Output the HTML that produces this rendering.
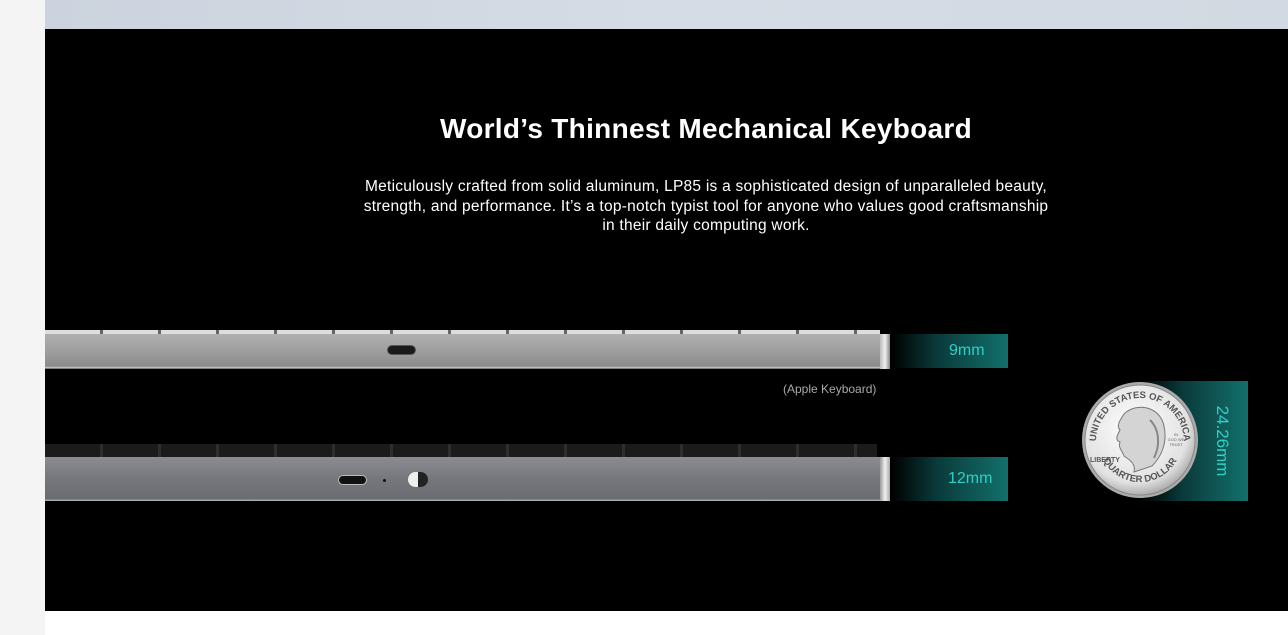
<!DOCTYPE html>
<html><head><meta charset="utf-8"><style>
*{margin:0;padding:0;box-sizing:border-box}
body{width:1288px;height:635px;background:#fff;position:relative;overflow:hidden;font-family:"Liberation Sans",sans-serif}
.left{position:absolute;left:0;top:0;width:45px;height:635px;background:#f4f4f4}
.top{position:absolute;left:45px;top:0;width:1243px;height:29px;background:linear-gradient(90deg,#ccd3de,#d6dce5 50%,#d3d9e2)}
.main{position:absolute;left:45px;top:29px;width:1243px;height:582px;background:#000}
h1{position:absolute;left:0;width:1412px;top:113px;text-align:center;color:#fff;font-size:28px;font-weight:bold;letter-spacing:0.3px}
.p{position:absolute;left:306px;width:800px;top:177px;text-align:center;color:#fff;font-size:15.5px;line-height:19.5px;letter-spacing:0.25px}
.abs{position:absolute}
.teal{background:linear-gradient(90deg,#000 0%,#0a3b3b 40%,#13706c 100%);color:#2fd0c6;font-size:16px}
</style></head><body>
<div class="left"></div><div class="top"></div><div class="main"></div>
<h1>World’s Thinnest Mechanical Keyboard</h1>
<div class="p">Meticulously crafted from solid aluminum, LP85 is a sophisticated design of unparalleled beauty,<br>strength, and performance. It’s a top-notch typist tool for anyone who values good craftsmanship<br>in their daily computing work.</div>

<!-- apple keyboard -->
<div class="abs" style="left:45px;top:330px;width:835px;height:4px;background:repeating-linear-gradient(90deg,#ddd 0 55px,#666 55px 58px)"></div>
<div class="abs" style="left:45px;top:334px;width:838px;height:35px;background:linear-gradient(180deg,#b0b0b0,#9a9a9a 60%,#8a8a8a 92%,#ccc 96%,#555);"></div>
<div class="abs" style="left:880px;top:334px;width:10px;height:35px;background:linear-gradient(90deg,#bbb,#eee,#888)"></div>
<div class="abs" style="left:387px;top:345px;width:29px;height:10px;border-radius:5px;background:#1a1a1a;border:1px solid #555"></div>
<div class="abs teal" style="left:891px;top:334px;width:117px;height:34px;padding:8px 0 0 58px">9mm</div>
<div class="abs" style="left:783px;top:382px;color:#aaa;font-size:12px">(Apple Keyboard)</div>

<!-- LP85 -->
<div class="abs" style="left:45px;top:444px;width:832px;height:13px;background:repeating-linear-gradient(90deg,#1b1b1b 0 55px,#2e2e2e 55px 58px)"></div>
<div class="abs" style="left:45px;top:457px;width:838px;height:44px;background:linear-gradient(180deg,#8a8c92,#75777d 50%,#6a6c72 95%,#b8bcc4)"></div>
<div class="abs" style="left:880px;top:457px;width:10px;height:44px;background:linear-gradient(90deg,#999,#f0f0f0,#aaa)"></div>
<div class="abs" style="left:338px;top:475px;width:29px;height:10px;border-radius:5px;background:#111;border:1px solid #bbb"></div>
<div class="abs" style="left:383px;top:479px;width:3px;height:3px;border-radius:50%;background:#111"></div>
<div class="abs" style="left:408px;top:472px;width:20px;height:15px;border-radius:8px;background:linear-gradient(90deg,#eee 50%,#222 50%)"></div>
<div class="abs teal" style="left:891px;top:457px;width:117px;height:44px;padding:13px 0 0 57px">12mm</div>

<!-- coin -->
<div class="abs" style="left:1140px;top:381px;width:108px;height:120px;background:linear-gradient(90deg,#000 0%,#0a3b3b 40%,#13706c 100%)"></div>
<div class="abs" style="top:441px;left:1222px;color:#2fd0c6;font-size:17px;transform:translate(-50%,-50%) rotate(90deg)">24.26mm</div>
<svg class="abs" style="left:1080px;top:380px" width="120" height="120" viewBox="0 0 120 120">
<defs><radialGradient id="g" cx="45%" cy="40%" r="65%"><stop offset="0" stop-color="#ffffff"/><stop offset="0.75" stop-color="#e2e2e2"/><stop offset="1" stop-color="#9a9a9a"/></radialGradient>
<path id="arcT" d="M16 62 A44 44 0 0 1 104 62"/><path id="arcB" d="M22 78 A42 42 0 0 0 98 78"/></defs>
<circle cx="60" cy="60" r="58" fill="#aaa"/><circle cx="60" cy="60" r="55" fill="url(#g)" stroke="#888" stroke-width="1"/>
<path d="M44 34 C56 22 80 26 84 46 C88 64 80 78 72 86 L54 92 C56 84 50 80 44 76 C42 70 38 68 40 62 C34 60 38 54 40 50 C36 46 40 40 44 34Z" fill="#d4d4d4" stroke="#777" stroke-width="1"/>
<path d="M70 40 C80 50 80 66 74 78" fill="none" stroke="#888" stroke-width="2"/>
<text font-size="9.5" fill="#555" font-weight="bold"><textPath href="#arcT" startOffset="50%" text-anchor="middle">UNITED STATES OF AMERICA</textPath></text>
<text font-size="9.5" fill="#555" font-weight="bold"><textPath href="#arcB" startOffset="50%" text-anchor="middle">QUARTER DOLLAR</textPath></text>
<text x="10" y="82" font-size="7" fill="#555" font-weight="bold">LIBERTY</text>
<text x="96" y="56" font-size="4" text-anchor="middle" fill="#666">IN</text>
<text x="96" y="61" font-size="4" text-anchor="middle" fill="#666">GOD WE</text>
<text x="96" y="66" font-size="4" text-anchor="middle" fill="#666">TRUST</text>
</svg>
</body></html>
